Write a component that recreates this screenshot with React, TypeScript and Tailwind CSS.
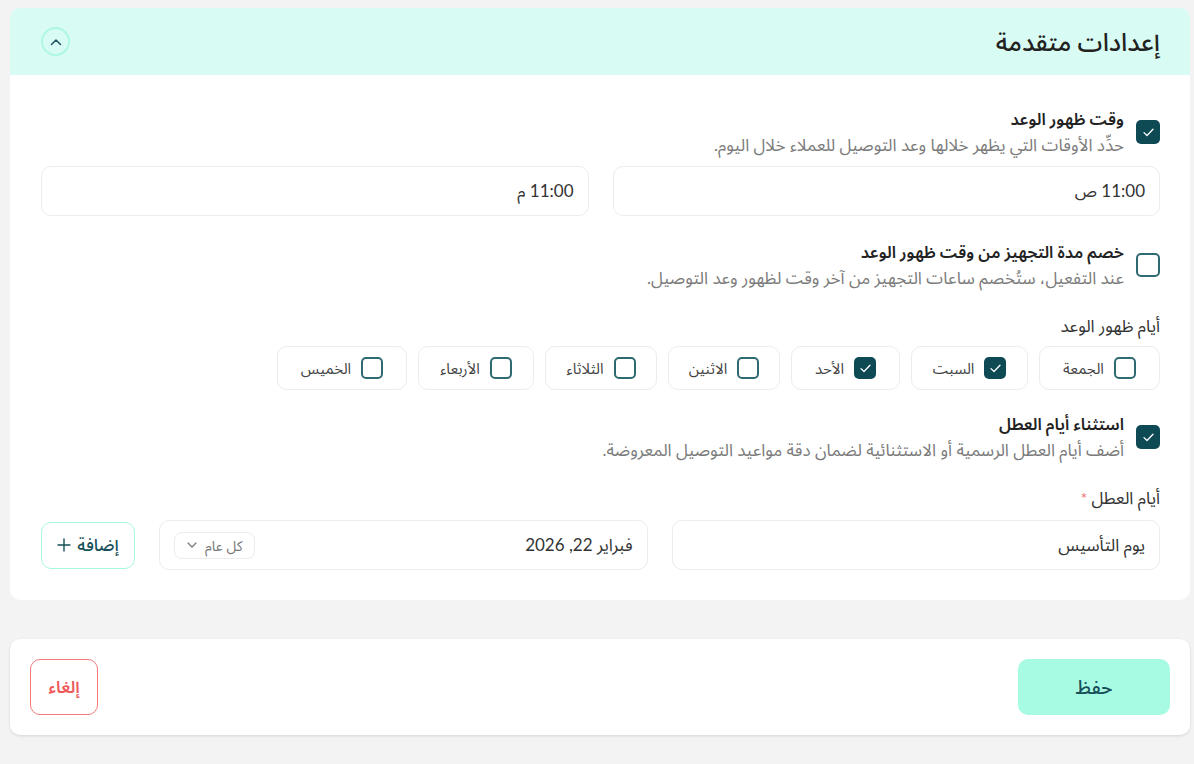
import { useState } from 'react'

const FONT = 'Lato, "Noto Sans Arabic", "DejaVu Sans", sans-serif'

function CheckMark() {
  return (
    <svg width="11" height="9" viewBox="0 0 11 9" fill="none">
      <path d="M1 4.6 L4 7.5 L10 1.3" stroke="white" strokeWidth="1.3" strokeLinecap="round" strokeLinejoin="round" />
    </svg>
  )
}

function Box({ checked, size = 'md' }: { checked: boolean; size?: 'md' | 'sm' }) {
  const dim = size === 'md' ? 'w-6 h-6 rounded-[5px]' : 'w-[22px] h-[22px] rounded-[5px]'
  return (
    <span
      className={`${dim} shrink-0 flex items-center justify-center ${
        checked ? 'bg-[#0e4a54]' : 'border-2 border-[#2f6a73] bg-white'
      }`}
    >
      {checked && <CheckMark />}
    </span>
  )
}

function OptionRow({ checked, title, desc, onToggle }: { checked: boolean; title: string; desc: string; onToggle: () => void }) {
  return (
    <div className="flex items-center gap-3 cursor-pointer" onClick={onToggle}>
      <Box checked={checked} />
      <div className="flex flex-col">
        <span className="text-[16.5px] leading-[25px] font-semibold text-[#222]">{title}</span>
        <span className="text-[17px] leading-[25px] text-[#7b7b7b]">{desc}</span>
      </div>
    </div>
  )
}

// day label + fixed pill width
const days: [string, string][] = [
  ['الجمعة', 'w-[121px]'],
  ['السبت', 'w-[117px]'],
  ['الأحد', 'w-[109px]'],
  ['الاثنين', 'w-[112px]'],
  ['الثلاثاء', 'w-[112px]'],
  ['الأربعاء', 'w-[116px]'],
  ['الخميس', 'w-[130px]'],
]

export default function App() {
  const [showTime, setShowTime] = useState(true)
  const [deductPrep, setDeductPrep] = useState(false)
  const [excludeHolidays, setExcludeHolidays] = useState(true)
  const [activeDays, setActiveDays] = useState<string[]>(['السبت', 'الأحد'])

  const toggleDay = (d: string) =>
    setActiveDays((prev) => (prev.includes(d) ? prev.filter((x) => x !== d) : [...prev, d]))

  return (
    <div dir="rtl" className="min-h-screen bg-[#f3f3f3] pt-2 pl-[10px] pr-[4px] pb-8" style={{ fontFamily: FONT }}>
      {/* Advanced settings card */}
      <div className="bg-white rounded-[10px] overflow-hidden">
        <div className="h-[67px] bg-[#d8fcf3] flex items-center justify-between pr-[30px] pl-[31px]">
          <h2 className="text-[25px] font-medium text-[#222]">إعدادات متقدمة</h2>
          <button className="w-[29px] h-[29px] rounded-full border-2 border-[#aef7e3] flex items-center justify-center">
            <svg width="12" height="8" viewBox="0 0 12 8" fill="none">
              <path d="M1.5 6.5 L6 2 L10.5 6.5" stroke="#1f5560" strokeWidth="1.5" strokeLinecap="round" strokeLinejoin="round" />
            </svg>
          </button>
        </div>

        <div className="pr-[30px] pl-[31px] pt-8 pb-[30px]">
          <OptionRow
            checked={showTime}
            onToggle={() => setShowTime(!showTime)}
            title="وقت ظهور الوعد"
            desc="حدِّد الأوقات التي يظهر خلالها وعد التوصيل للعملاء خلال اليوم."
          />

          <div className="grid grid-cols-2 gap-6 mt-[9px]">
            <div className="h-[50px] rounded-[10px] border border-[#ececec] flex items-center px-[14px] text-[17px] text-[#333]">
              11:00 ص
            </div>
            <div className="h-[50px] rounded-[10px] border border-[#ececec] flex items-center px-[14px] text-[17px] text-[#333]">
              11:00 م
            </div>
          </div>

          <div className="mt-[24px]">
            <OptionRow
              checked={deductPrep}
              onToggle={() => setDeductPrep(!deductPrep)}
              title="خصم مدة التجهيز من وقت ظهور الوعد"
              desc="عند التفعيل، ستُخصم ساعات التجهيز من آخر وقت لظهور وعد التوصيل."
            />
          </div>

          <div className="mt-[24px] text-[17px] leading-[24px] text-[#333]">أيام ظهور الوعد</div>
          <div className="flex gap-[11px] mt-[8px]">
            {days.map(([d, w]) => (
              <button
                key={d}
                onClick={() => toggleDay(d)}
                className={`${w} h-11 rounded-[10px] border border-[#ececec] flex items-center justify-center gap-[10px] text-[15px] text-[#444]`}
              >
                <Box checked={activeDays.includes(d)} size="sm" />
                <span>{d}</span>
              </button>
            ))}
          </div>

          <div className="mt-[22px]">
            <OptionRow
              checked={excludeHolidays}
              onToggle={() => setExcludeHolidays(!excludeHolidays)}
              title="استثناء أيام العطل"
              desc="أضف أيام العطل الرسمية أو الاستثنائية لضمان دقة مواعيد التوصيل المعروضة."
            />
          </div>

          <div className="mt-[24px] text-[17px] leading-[24px] text-[#333]">
            أيام العطل <span className="text-[#f26d6d] text-[15px]">*</span>
          </div>
          <div className="flex items-center gap-6 mt-[10px]">
            <div className="flex-1 h-[50px] rounded-[10px] border border-[#ececec] flex items-center px-[14px] text-[17px] text-[#333]">
              يوم التأسيس
            </div>
            <div className="flex-1 h-[50px] rounded-[10px] border border-[#ececec] flex items-center justify-between px-[14px] text-[17px] text-[#333]">
              <span>فبراير 22, 2026</span>
              <span className="h-[27px] px-3 rounded-[8px] border border-[#ececec] flex items-center gap-[8px] text-[14px] text-[#777]">
                كل عام
                <svg width="10" height="6" viewBox="0 0 10 6" fill="none">
                  <path d="M1 1 L5 5 L9 1" stroke="#777" strokeWidth="1.2" strokeLinecap="round" strokeLinejoin="round" />
                </svg>
              </span>
            </div>
            <button className="w-[94px] h-[47px] rounded-[10px] border border-[#a9f6e1] flex items-center justify-center gap-[6px] text-[17px] font-medium text-[#174f59]">
              إضافة
              <svg width="14" height="14" viewBox="0 0 14 14" fill="none">
                <path d="M7 1 V13 M1 7 H13" stroke="#174f59" strokeWidth="1.4" strokeLinecap="round" />
              </svg>
            </button>
          </div>
        </div>
      </div>

      {/* Action bar */}
      <div className="mt-[39px] bg-white rounded-[10px] shadow-[0_1px_3px_rgba(0,0,0,0.12)] p-5 flex items-center justify-between">
        <button className="w-[152px] h-14 rounded-[10px] bg-[#a8fbe3] text-[19px] font-medium text-[#174f59]">حفظ</button>
        <button className="w-[68px] h-14 rounded-[10px] border border-[#f47b7b] text-[17px] font-semibold text-[#ee5a5a]">إلغاء</button>
      </div>
    </div>
  )
}
